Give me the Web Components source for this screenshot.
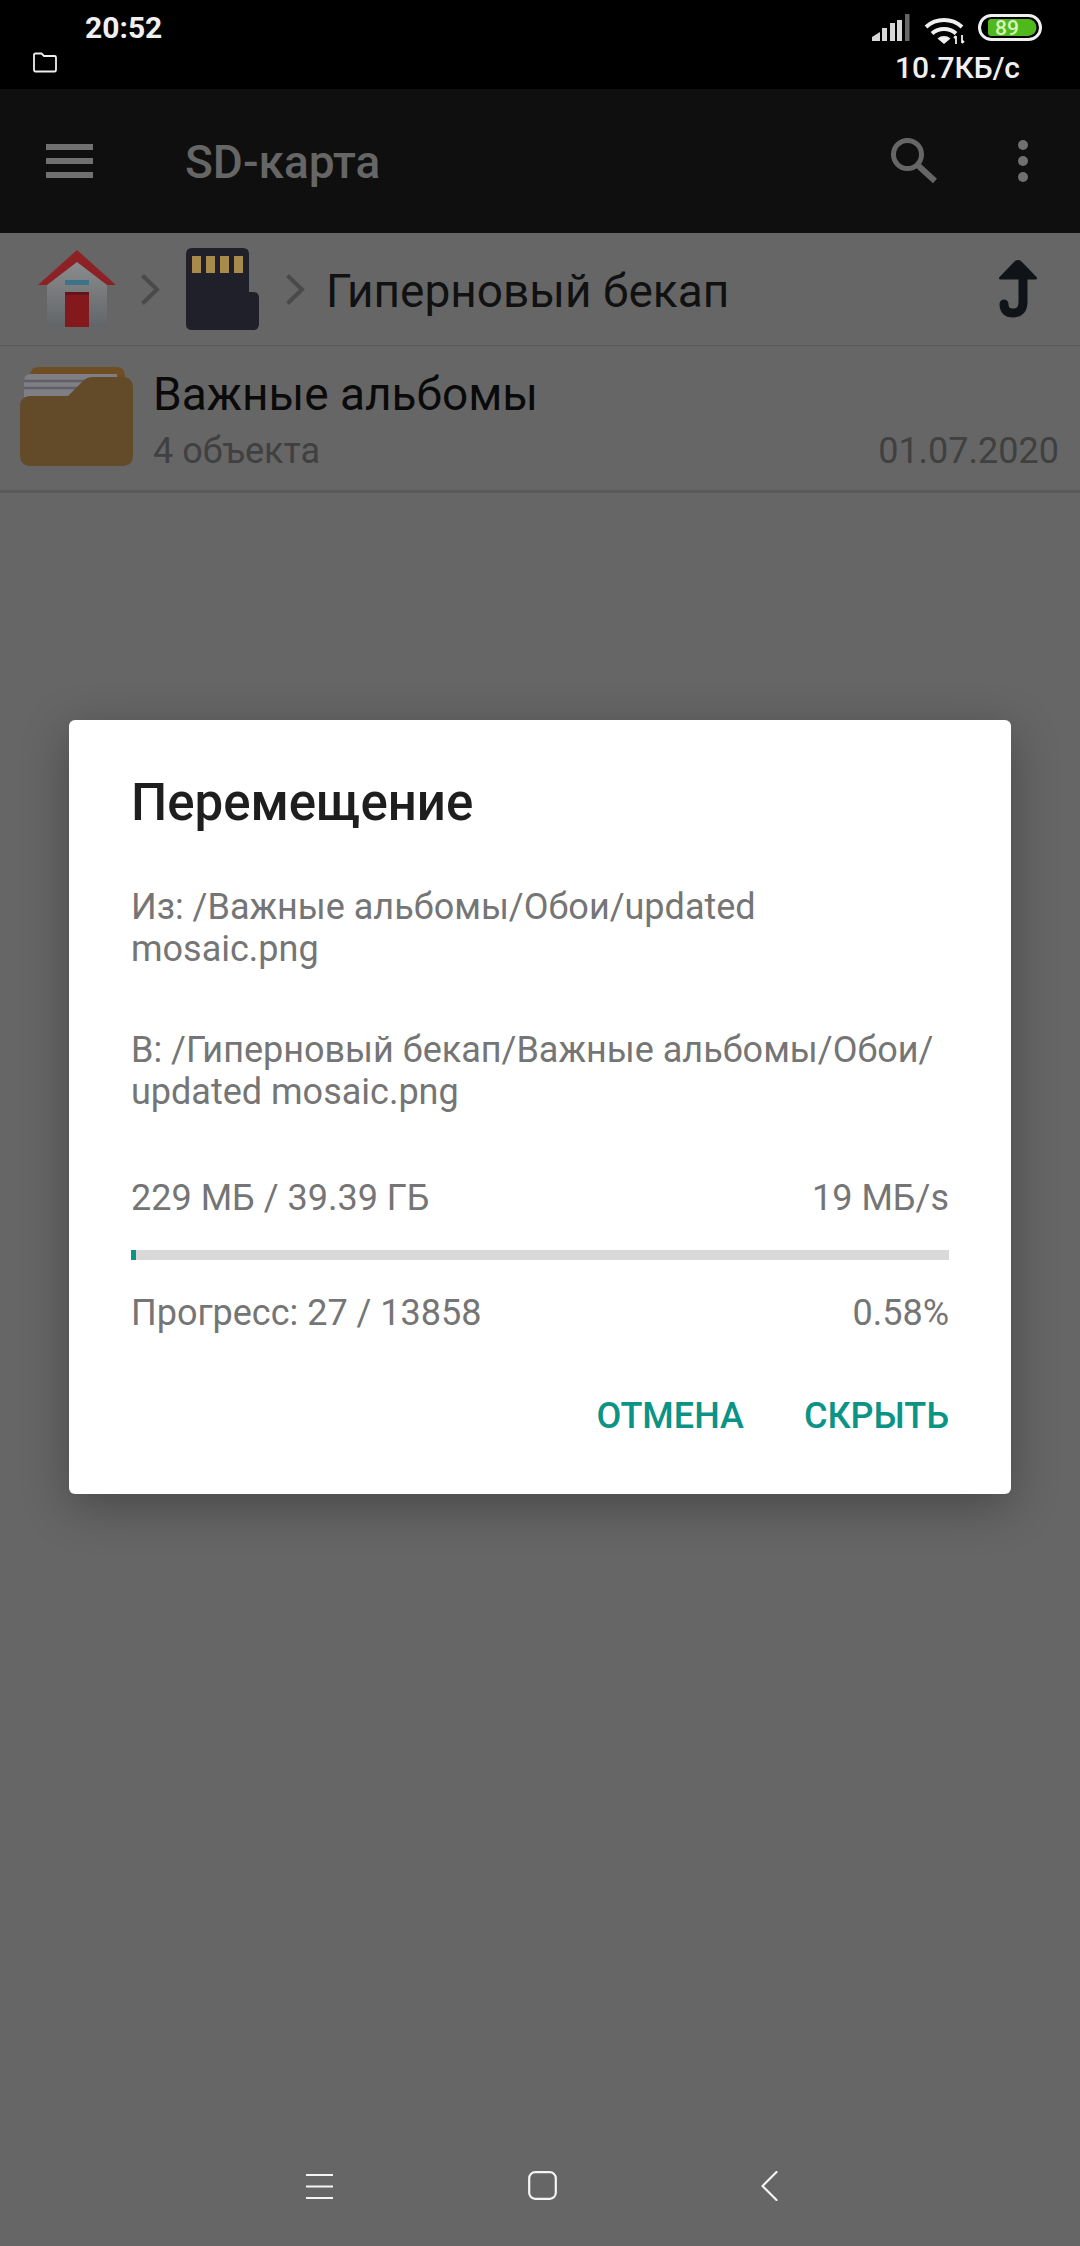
<!DOCTYPE html>
<html>
<head>
<meta charset="utf-8">
<style>
html, body { margin: 0; padding: 0; background: #666; }
body { width: 1080px; height: 2246px; overflow: hidden; font-family: Roboto, "Noto Sans", sans-serif; }
</style>
</head>
<body>
<fm-app>
  <fm-status slot="status" time="20:52" speed="10.7КБ/с" battery="89"></fm-status>
  <fm-toolbar slot="toolbar" title="SD-карта"></fm-toolbar>
  <fm-path slot="path" name="Гиперновый бекап"></fm-path>
  <fm-row slot="list" name="Важные альбомы" info="4 объекта" date="01.07.2020"></fm-row>
  <fm-dialog slot="dialog" heading="Перемещение">
    <p>Из: /Важные альбомы/Обои/updated<br>mosaic.png</p>
    <p>В: /Гиперновый бекап/Важные альбомы/Обои/<br>updated mosaic.png</p>
    <fm-progress done="229 МБ / 39.39 ГБ" speed="19 МБ/s" count="Прогресс: 27 / 13858" percent="0.58%" value="0.58"></fm-progress>
    <fm-button slot="actions">ОТМЕНА</fm-button>
    <fm-button slot="actions">СКРЫТЬ</fm-button>
  </fm-dialog>
  <fm-nav slot="nav"></fm-nav>
</fm-app>

<script>
customElements.define('fm-app', class extends HTMLElement {
    constructor() {
        super()
        let sr = this.attachShadow({mode: 'open'})
        sr.innerHTML = `
<style>
:host { display: flex; flex-direction: column; position: relative; width: 1080px; height: 2246px; }
main { flex: 1; }
#over {
  position: absolute; left: 0; right: 0; top: 720px;
  display: flex; justify-content: center;
}
</style>
<slot name="status"></slot>
<slot name="toolbar"></slot>
<slot name="path"></slot>
<main><slot name="list"></slot></main>
<slot name="nav"></slot>
<div id="over"><slot name="dialog"></slot></div>`
    }
})

customElements.define('fm-status', class extends HTMLElement {
    constructor() {
        super()
        let sr = this.attachShadow({mode: 'open'})
        sr.innerHTML = `
<style>
:host {
  display: flex; justify-content: space-between; height: 89px; background: #000;
  color: #f0f0f0; font: 500 30px/33px Roboto, sans-serif;
}
#left { padding: 11px 0 0 33px; }
#time { margin-left: 52px; height: 41px; font-weight: 700; }
#right { display: flex; flex-direction: column; align-items: flex-end; padding: 14px 38px 0 0; }
#icons { height: 38px; }
svg { display: block; overflow: visible; }
#speed { margin-right: 22px; margin-top: -1px; }
</style>
<div id="left">
  <div id="time">${this.getAttribute('time')}</div>
  <svg width="24" height="21" viewBox="0 0 24 21"><path d="M1 17.5V3q0-1.5 1.5-1.5h6L11 4h10.5Q23 4 23 5.500V17.500Q23 19.500 21.500 19.500H2.500Q1 19.500 1 17.500Z" fill="none" stroke="#f0f0f0" stroke-width="1.800"/></svg>
</div>
<div id="right">
  <div id="icons">
    <svg width="170" height="28" viewBox="0 0 170 28">
      <g fill="#d8d8d8">
        <path d="M0 27v-4l8-5v9z"/><rect x="10" y="14" width="5" height="13"/><rect x="18" y="9" width="5" height="18"/><rect x="25" y="6" width="5" height="21"/>
      </g>
      <rect x="33" y="0" width="4.500" height="27" fill="#666"/>
      <g fill="none" stroke="#f0f0f0" stroke-width="4">
        <path d="M54 13a27 27 0 0 1 36 0"/><path d="M60 19.500a18 18 0 0 1 24 0"/>
      </g>
      <path d="M72 30l-6.500-5.500a10 10 0 0 1 13 0z" fill="#f0f0f0"/>
      <path d="M84 22v8M82 24l2-2M90 21v8M92 27l-2 2" stroke="#f0f0f0" stroke-width="1.800" fill="none"/>
      <rect x="107.500" y="1.500" width="61" height="24" rx="12" fill="none" stroke="#f0f0f0" stroke-width="3"/>
      <path d="M119 5h37a8.500 8.500 0 0 1 0 17h-37q-3 0-3-3v-11q0-3 3-3z" fill="#4eb81d"/>
      <text x="123" y="21" font-family="Roboto, sans-serif" font-size="21" font-weight="500" fill="#d8f5b8">${this.getAttribute('battery')}</text>
    </svg>
  </div>
  <div id="speed">${this.getAttribute('speed')}</div>
</div>`
    }
})

customElements.define('fm-toolbar', class extends HTMLElement {
    constructor() {
        super()
        let sr = this.attachShadow({mode: 'open'})
        sr.innerHTML = `
<style>
:host {
  display: flex; align-items: center; height: 144px; background: #0f0f0f;
  color: #666; font: 500 46px/52px Roboto, sans-serif;
}
#menu { margin-left: 46px; }
h1 { font: inherit; margin: 0 0 0 92px; flex: 1; position: relative; top: 1px; }
#search { margin-right: 81px; }
#more { margin-right: 52px; }
svg { display: block; }
</style>
<svg id="menu" width="47" height="34" viewBox="0 0 47 34"><path fill="#707070" d="M0 0h47v6H0zM0 14h47v6H0zM0 28h47v6H0z"/></svg>
<h1>${this.getAttribute('title')}</h1>
<svg id="search" width="46" height="46" viewBox="0 0 46 46"><circle cx="16.500" cy="16.500" r="14" fill="none" stroke="#666" stroke-width="5"/><path d="M26.500 27L44 43" stroke="#666" stroke-width="6" fill="none"/></svg>
<svg id="more" width="10" height="42" viewBox="0 0 10 42"><g fill="#707070"><circle cx="5" cy="5" r="5"/><circle cx="5" cy="21" r="5"/><circle cx="5" cy="37" r="5"/></g></svg>`
    }
})

customElements.define('fm-path', class extends HTMLElement {
    constructor() {
        super()
        let sr = this.attachShadow({mode: 'open'})
        let chevron = `<svg class="chev" width="20" height="33" viewBox="0 0 20 33"><path d="M2.500 2.500L17 16.500L2.500 30.500" fill="none" stroke="#4a4a4a" stroke-width="4"/></svg>`
        sr.innerHTML = `
<style>
:host {
  display: flex; align-items: center; height: 113px; padding-left: 37px; box-sizing: border-box;
  border-bottom: 1px solid #5a5a5a; color: #111; font: 400 46px/52px Roboto, sans-serif;
}
svg { display: block; flex: none; }
.chev { margin: 0 0 0 23px; }
#sd { margin-left: 26px; }
#sd + .chev { margin-left: 26px; }
span { margin-left: 21px; flex: 1; position: relative; top: 2px; }
#up { margin-right: 42px; }
</style>
<svg width="80" height="79" viewBox="0 0 80 79">
  <defs><linearGradient id="wall" x1="0" y1="0" x2="0" y2="1"><stop offset="0" stop-color="#8c8d8f"/><stop offset="1" stop-color="#626568"/></linearGradient></defs>
  <path d="M10 34L40 10L70 34V77H10z" fill="url(#wall)"/>
  <path d="M1 35L40 0L79 35H70L40 12L10 35z" fill="#8c2226"/>
  <rect x="28" y="30" width="24" height="5" fill="#3d7388"/>
  <rect x="28" y="42" width="24" height="35" fill="#84191d"/>
  <rect x="28" y="42" width="24" height="3" fill="#641519"/>
</svg>
${chevron}
<svg id="sd" width="73" height="82" viewBox="0 0 73 82">
  <path d="M6 0H57Q63 0 63 6V44H67Q73 44 73 50V76Q73 82 67 82H6Q0 82 0 76V6Q0 0 6 0Z" fill="#20202b"/>
  <g fill="#a88a4a"><rect x="6" y="8" width="9" height="17"/><rect x="20" y="8" width="9" height="17"/><rect x="34" y="8" width="9" height="17"/><rect x="48" y="8" width="9" height="17"/></g>
</svg>
${chevron}
<span>${this.getAttribute('name')}</span>
<svg id="up" width="40" height="58" viewBox="0 0 40 58">
  <path d="M14.500 19.500H2.500Q0 19.500 1.500 17L17 1Q20 -1 23 1L38.500 17Q40 19.500 37.500 19.500H14.500Z" fill="#101418"/>
  <path d="M25 18V42Q25 53 15 53Q6 53 6 44" fill="none" stroke="#101418" stroke-width="9" stroke-linecap="round"/>
</svg>`
    }
})

customElements.define('fm-row', class extends HTMLElement {
    constructor() {
        super()
        let sr = this.attachShadow({mode: 'open'})
        sr.innerHTML = `
<style>
:host {
  display: flex; height: 147px; box-sizing: border-box; padding: 21px 21px 0 20px;
  border-bottom: 3px solid #5a5a5a; font-family: Roboto, sans-serif;
}
svg { display: block; flex: none; }
#text { flex: 1; margin-left: 20px; }
#name { font-size: 46px; line-height: 52px; color: #0a0a0a; margin-top: 1px; }
#meta { display: flex; justify-content: space-between; font-size: 36px; line-height: 40px; color: #404040; margin-top: 11px; }
</style>
<svg width="113" height="99" viewBox="0 0 113 99">
  <path d="M10 30V9Q10 0 19 0H96Q105 0 105 9V30z" fill="#6e4e22"/>
  <path d="M4 14Q4 7 11 7H97V32H4z" fill="#7e7e84"/>
  <path d="M4 14H97M4 21H97" stroke="#5f5f66" stroke-width="2.500"/>
  <path d="M0 40Q0 29 11 29H48L63 14Q67 10 73 10H102Q113 10 113 21V88Q113 99 102 99H11Q0 99 0 88Z" fill="#634b2a"/>
</svg>
<div id="text">
  <div id="name">${this.getAttribute('name')}</div>
  <div id="meta"><span>${this.getAttribute('info')}</span><span>${this.getAttribute('date')}</span></div>
</div>`
    }
})

customElements.define('fm-dialog', class extends HTMLElement {
    constructor() {
        super()
        let sr = this.attachShadow({mode: 'open'})
        sr.innerHTML = `
<style>
:host {
  display: block; width: 942px; height: 774px; box-sizing: border-box; padding: 0 62px;
  background: #fff; border-radius: 6px; box-shadow: 0 12px 48px rgba(0,0,0,.3);
  font: 400 36px/42px Roboto, sans-serif; color: #757575;
}
h2 { font: 500 51px/60px Roboto, sans-serif; color: #1e1e1e; margin: 0; padding-top: 53px; }
#body { margin-top: 53px; }
#actions { display: flex; justify-content: flex-end; gap: 60px; margin-top: 61px; }
::slotted(p) { margin: 0 0 59px; }
</style>
<h2>${this.getAttribute('heading')}</h2>
<div id="body"><slot></slot></div>
<div id="actions"><slot name="actions"></slot></div>`
    }
})

customElements.define('fm-progress', class extends HTMLElement {
    constructor() {
        super()
        let sr = this.attachShadow({mode: 'open'})
        sr.innerHTML = `
<style>
:host { display: block; margin-top: 64px; }
.line { display: flex; justify-content: space-between; }
#bar { height: 10px; background: #d9d9d9; margin: 31px 0 32px; }
#bar div { height: 100%; width: ${Math.max(5, 818 * this.getAttribute('value') / 100)}px; background: #0d9384; }
</style>
<div class="line"><span>${this.getAttribute('done')}</span><span>${this.getAttribute('speed')}</span></div>
<div id="bar"><div></div></div>
<div class="line"><span>${this.getAttribute('count')}</span><span>${this.getAttribute('percent')}</span></div>`
    }
})

customElements.define('fm-button', class extends HTMLElement {
    constructor() {
        super()
        let sr = this.attachShadow({mode: 'open'})
        sr.innerHTML = `
<style>
:host { display: block; font: 500 36px/42px Roboto, sans-serif; color: #0b9485; }
</style>
<slot></slot>`
    }
})

customElements.define('fm-nav', class extends HTMLElement {
    constructor() {
        super()
        let sr = this.attachShadow({mode: 'open'})
        sr.innerHTML = `
<style>
:host { display: flex; height: 106px; align-items: flex-start; padding: 31px 0 0 306px; box-sizing: border-box; }
svg { display: block; flex: none; }
#home { margin-left: 195px; }
#back { margin-left: 204px; }
</style>
<svg width="27" height="28" viewBox="0 0 27 28" style="margin-top:2px"><path d="M0 2h27M0 13.500h27M0 25h27" stroke="#f4f4f4" stroke-width="2.200" fill="none"/></svg>
<svg id="home" width="29" height="29" viewBox="0 0 29 29"><rect x="1.200" y="1.200" width="26.600" height="26.600" rx="6" fill="none" stroke="#f4f4f4" stroke-width="2.200"/></svg>
<svg id="back" width="17" height="30" viewBox="0 0 17 30"><path d="M15.500 1L1.500 15L15.500 29" fill="none" stroke="#f4f4f4" stroke-width="2.200" stroke-linecap="round"/></svg>`
    }
})
</script>
</body>
</html>
